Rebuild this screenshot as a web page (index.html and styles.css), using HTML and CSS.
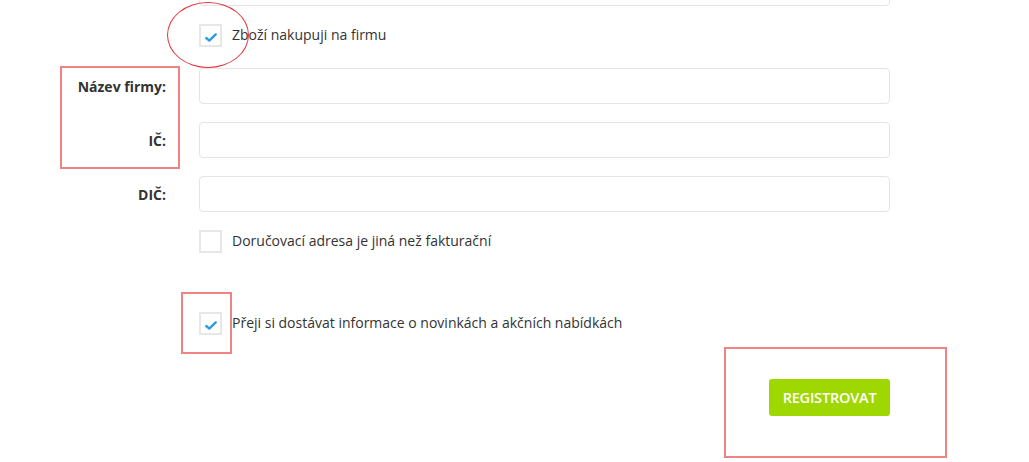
FILE: index.html
```html
<!DOCTYPE html>
<html lang="cs">
<head>
    <meta charset="utf-8" />
    <title>Registrace</title>
    <link rel="stylesheet" href="styles.css">
</head>
<body>

    <form class="reg-form">

        <div class="row">
            <label class="row-label"></label>
            <div class="row-field"><input type="text" class="text-input"></div>
        </div>

        <div class="row row-check">
            <span class="row-label"></span>
            <label class="check">
                <span class="check-box">
                    <svg width="12" height="9" viewBox="0 0 12 9"><path d="M1.3 5 L4.3 7.6 L10.7 1.4" fill="none" stroke="#2f9be0" stroke-width="2.4" stroke-linecap="round" stroke-linejoin="round"/></svg>
                </span>
                Zboží nakupuji na firmu
            </label>
            <span class="mark mark-ellipse"></span>
        </div>

        <div class="row row-first">
            <label class="row-label">Název firmy:</label>
            <div class="row-field"><input type="text" class="text-input"></div>
            <span class="mark mark-labels"></span>
        </div>

        <div class="row">
            <label class="row-label">IČ:</label>
            <div class="row-field"><input type="text" class="text-input"></div>
        </div>

        <div class="row">
            <label class="row-label">DIČ:</label>
            <div class="row-field"><input type="text" class="text-input"></div>
        </div>

        <div class="row row-check">
            <span class="row-label"></span>
            <label class="check">
                <span class="check-box"></span>
                Doručovací adresa je jiná než fakturační
            </label>
        </div>

        <div class="row row-check row-news">
            <span class="row-label"></span>
            <label class="check">
                <span class="check-box">
                    <svg width="12" height="9" viewBox="0 0 12 9"><path d="M1.3 5 L4.3 7.6 L10.7 1.4" fill="none" stroke="#2f9be0" stroke-width="2.4" stroke-linecap="round" stroke-linejoin="round"/></svg>
                </span>
                Přeji si dostávat informace o novinkách a akčních nabídkách
            </label>
            <span class="mark mark-news"></span>
        </div>

        <div class="row row-submit">
            <button type="button" class="btn-submit">REGISTROVAT</button>
            <span class="mark mark-submit"></span>
        </div>

    </form>

</body>
</html>
```

FILE: styles.css
```css
body{
    margin: 0;
    font-family: "Open Sans", "DejaVu Sans", sans-serif;
    font-size: 14px;
    color: #333;
    background: #fff;
}

.reg-form{
    width: 890px;
    margin-top: -30px;
    padding-bottom: 28px;
}

.row{
    position: relative;
    display: flex;
    align-items: center;
    margin-bottom: 18px;
}

.row-label{
    width: 166px;
    padding-right: 33px;
    text-align: right;
    font-weight: bold;
    flex: none;
}

.row-field{
    flex: 1;
}

.text-input{
    display: block;
    box-sizing: border-box;
    width: 100%;
    height: 36px;
    border: 1px solid #e4e4e4;
    border-radius: 4px;
    outline: none;
}

.row-first{
    margin-top: 21px;
}

.check{
    display: flex;
    align-items: center;
    gap: 10px;
    height: 23px;
    line-height: 19px;
    position: relative;
    top: -1px;
}

.check-box{
    box-sizing: border-box;
    width: 23px;
    height: 23px;
    border: 2px solid #e7e7e7;
    display: flex;
    align-items: center;
    justify-content: center;
    padding-top: 3px;
    position: relative;
    top: 1px;
}

.row-news{
    margin-top: 59px;
}

.row-submit{
    justify-content: flex-end;
    margin-top: 44px;
}

.btn-submit{
    width: 121px;
    height: 37px;
    border: 0;
    border-radius: 3px;
    background: #9fd700;
    color: #fff;
    font-family: inherit;
    font-size: 14.5px;
    font-weight: 600;
    letter-spacing: -0.2px;
    padding: 0;
}

/* red annotation marks */
.mark{
    position: absolute;
    box-sizing: border-box;
    border: 2px solid #ef8384;
}

.mark-ellipse{
    left: 167px;
    top: -22px;
    width: 82px;
    height: 66px;
    border: 1px solid #e0343a;
    border-radius: 50%;
}

.mark-labels{
    left: 60px;
    top: -2px;
    width: 120px;
    height: 103px;
}

.mark-news{
    left: 181px;
    top: -20px;
    width: 51px;
    height: 62px;
}

.mark-submit{
    left: 724px;
    top: -32px;
    width: 223px;
    height: 111px;
}
```
